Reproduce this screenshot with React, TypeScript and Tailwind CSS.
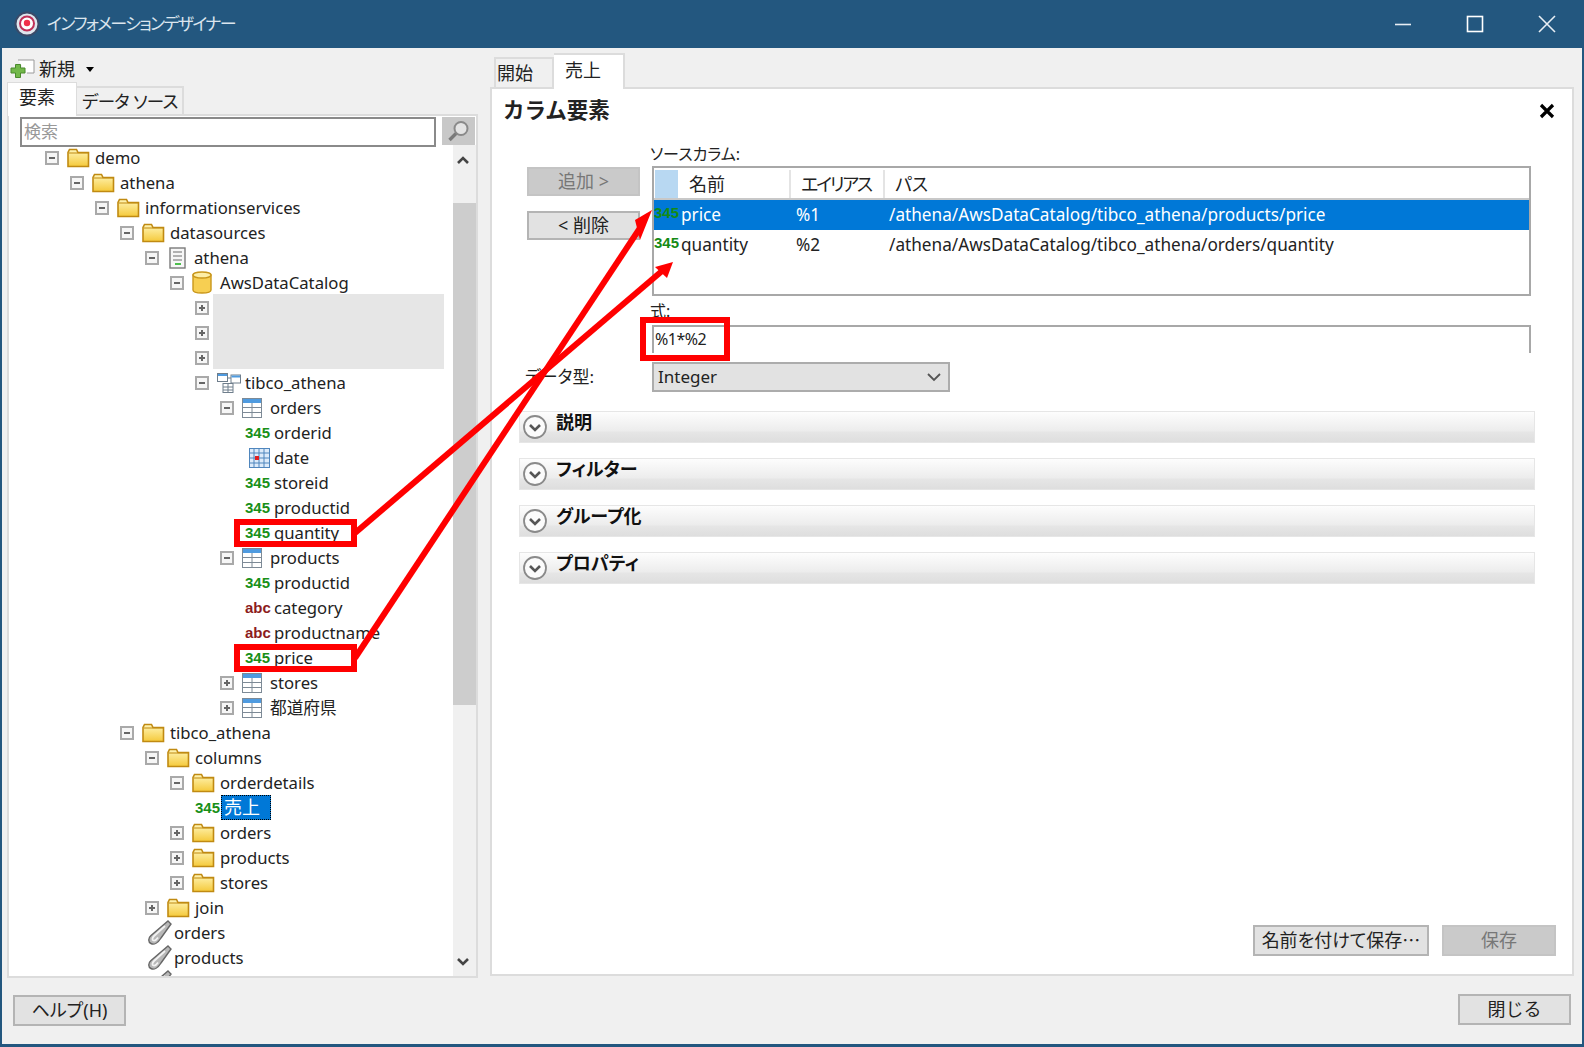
const font = "font-['Noto_Sans','Noto_Sans_CJK_JP',sans-serif]";

type Row = { l: number; t: string; i: string; e?: "-" | "+" };

const rows: Row[] = [
  { l: 0, t: "demo", i: "folder", e: "-" },
  { l: 1, t: "athena", i: "folder", e: "-" },
  { l: 2, t: "informationservices", i: "folder", e: "-" },
  { l: 3, t: "datasources", i: "folder", e: "-" },
  { l: 4, t: "athena", i: "doc", e: "-" },
  { l: 5, t: "AwsDataCatalog", i: "db", e: "-" },
  { l: 6, t: "", i: "blank", e: "+" },
  { l: 6, t: "", i: "blank", e: "+" },
  { l: 6, t: "", i: "blank", e: "+" },
  { l: 6, t: "tibco_athena", i: "schema", e: "-" },
  { l: 7, t: "orders", i: "table", e: "-" },
  { l: 8, t: "orderid", i: "num" },
  { l: 8, t: "date", i: "cal" },
  { l: 8, t: "storeid", i: "num" },
  { l: 8, t: "productid", i: "num" },
  { l: 8, t: "quantity", i: "num" },
  { l: 7, t: "products", i: "table", e: "-" },
  { l: 8, t: "productid", i: "num" },
  { l: 8, t: "category", i: "abc" },
  { l: 8, t: "productname", i: "abc" },
  { l: 8, t: "price", i: "num" },
  { l: 7, t: "stores", i: "table", e: "+" },
  { l: 7, t: "都道府県", i: "table", e: "+" },
  { l: 3, t: "tibco_athena", i: "folder", e: "-" },
  { l: 4, t: "columns", i: "folder", e: "-" },
  { l: 5, t: "orderdetails", i: "folder", e: "-" },
  { l: 6, t: "売上", i: "num" },
  { l: 5, t: "orders", i: "folder", e: "+" },
  { l: 5, t: "products", i: "folder", e: "+" },
  { l: 5, t: "stores", i: "folder", e: "+" },
  { l: 4, t: "join", i: "folder", e: "+" },
  { l: 4, t: "orders", i: "link" },
  { l: 4, t: "products", i: "link" },
  { l: 4, t: "", i: "link" },
];

function Folder() {
  return (
    <svg width="23" height="20" viewBox="0 0 23 20" className="mr-[5px] shrink-0">
      <defs>
        <linearGradient id="fld" x1="0" y1="0" x2="0" y2="1">
          <stop offset="0" stopColor="#fff6b8" />
          <stop offset="1" stopColor="#f5c93a" />
        </linearGradient>
      </defs>
      <path d="M1 18.5V4.5L2.5 1.5H9.5L11 4.5H21.5V18.5Z" fill="url(#fld)" stroke="#c08a12" strokeWidth="1.6" />
      <path d="M2 5H21" stroke="#c08a12" strokeWidth="1" />
    </svg>
  );
}

function TableIcon() {
  return (
    <svg width="20" height="20" viewBox="0 0 20 20" className="mr-[8px] shrink-0">
      <rect x="0.5" y="0.5" width="19" height="19" fill="#fff" stroke="#7d8a96" />
      <rect x="1" y="1" width="18" height="4" fill="#4f9be0" />
      <path d="M1 9.5H19M1 14.5H19M10 5V19" stroke="#7d8a96" />
    </svg>
  );
}

function TreeIcon({ i }: { i: string }) {
  if (i === "folder") return <Folder />;
  if (i === "table") return <TableIcon />;
  if (i === "num")
    return <span className="w-[29px] shrink-0 font-['Liberation_Sans',sans-serif] text-[15px] font-bold leading-none text-[#189018]">345</span>;
  if (i === "abc")
    return <span className="w-[29px] shrink-0 font-['Liberation_Sans',sans-serif] text-[15px] font-bold leading-none text-[#8c1c1c]">abc</span>;
  if (i === "doc")
    return (
      <svg width="17" height="22" viewBox="0 0 17 22" className="ml-[2px] mr-[8px] shrink-0">
        <rect x="1" y="1" width="15" height="20" fill="#f7f7f7" stroke="#7a7a7a" strokeWidth="1.4" />
        <path d="M4 5H13M4 9H13M4 13H13" stroke="#9a9a9a" strokeWidth="1.4" />
        <path d="M6 17H12" stroke="#22b022" strokeWidth="1.6" />
      </svg>
    );
  if (i === "db")
    return (
      <svg width="20" height="23" viewBox="0 0 20 23" className="mr-[8px] shrink-0">
        <path d="M1 4V19C1 21 5 22 10 22S19 21 19 19V4Z" fill="#f7cf52" stroke="#c9971b" strokeWidth="1.4" />
        <ellipse cx="10" cy="4" rx="9" ry="3" fill="#fdeea6" stroke="#c9971b" strokeWidth="1.4" />
      </svg>
    );
  if (i === "schema")
    return (
      <svg width="24" height="20" viewBox="0 0 24 20" className="mr-[4px] shrink-0">
        <rect x="0.5" y="0.5" width="10" height="8" fill="#fff" stroke="#6f7e8c" />
        <rect x="1" y="1" width="9" height="2" fill="#4f9be0" />
        <rect x="14" y="2" width="9.5" height="8" fill="#fff" stroke="#6f7e8c" />
        <rect x="14.5" y="2.5" width="8.5" height="2" fill="#4f9be0" />
        <rect x="6" y="10.5" width="10" height="9" fill="#fff" stroke="#6f7e8c" />
        <path d="M6 14H16M6 17H16M11 11V19M10.5 5H14" stroke="#6f7e8c" />
      </svg>
    );
  if (i === "cal")
    return (
      <svg width="21" height="20" viewBox="0 0 21 20" className="ml-[4px] mr-[4px] shrink-0">
        <rect x="0.5" y="0.5" width="20" height="19" fill="#dcebfa" stroke="#4f86bd" />
        <path d="M5 1V19M10 1V19M15 1V19M1 5H20M1 10H20M1 15H20" stroke="#4f86bd" />
        <rect x="6" y="8" width="4" height="4" fill="#e02020" />
      </svg>
    );
  if (i === "link")
    return (
      <svg width="25" height="25" viewBox="0 0 25 25" className="ml-[2px] mr-[2px] shrink-0">
        <path d="M21 1L24 4L14 18C11 23 7 25 4 23.5C1 22 1 18 4 15.5Z" fill="#b8b8b8" stroke="#666" strokeWidth="1.4" />
        <path d="M18 6L7 16C5 18 5 20 6.5 20.5C8 21 10 19 11 17.5" fill="none" stroke="#f2f2f2" strokeWidth="1.8" />
      </svg>
    );
  return null;
}

function Expander({ e }: { e: "-" | "+" }) {
  return (
    <span className="relative mr-[8px] h-[14px] w-[14px] shrink-0 border-2 border-[#a9a9a9] bg-[#f6f6f6]">
      <span className="absolute left-[2px] top-[4px] h-[2px] w-[6px] bg-[#666]" />
      {e === "+" && <span className="absolute left-[4px] top-[2px] h-[6px] w-[2px] bg-[#666]" />}
    </span>
  );
}

function TreeRow({ r }: { r: Row }) {
  const selected = r.t === "売上";
  return (
    <div className="flex h-[25px] shrink-0 items-center" style={{ paddingLeft: 36 + r.l * 25 }}>
      {r.e && <Expander e={r.e} />}
      <TreeIcon i={r.i} />
      {r.i === "blank" ? null : selected ? (
        <span className="ml-[-3px] border border-dotted border-black bg-[#0078d7] pl-[2px] pr-[10px] text-[18px] leading-[23px] text-white">{r.t}</span>
      ) : (
        <span className="text-[16.7px] leading-[22px] text-[#222]">{r.t}</span>
      )}
    </div>
  );
}

function Button({ children, disabled, className }: { children: React.ReactNode; disabled?: boolean; className: string }) {
  return (
    <div
      className={`flex items-center justify-center border-2 text-[18px] ${
        disabled ? "border-[#c4c4c4] bg-[#cacaca] text-[#777]" : "border-[#b4b4b4] bg-[#e2e2e2] text-[#222]"
      } ${className}`}
    >
      {children}
    </div>
  );
}

function Section({ label }: { label: string }) {
  return (
    <div className="relative flex h-[32px] items-start border border-[#e6e6e6] bg-[linear-gradient(#fdfdfd,#ececec_64%,#e6e6e6_66%,#dedede)]">
      <svg width="26" height="26" viewBox="0 0 26 26" className="ml-[2px] mt-[2px] shrink-0">
        <circle cx="13" cy="13" r="11" fill="#fbfbfb" stroke="#8a8a8a" strokeWidth="1.8" />
        <path d="M8 11L13 16L18 11" fill="none" stroke="#555" strokeWidth="2.6" />
      </svg>
      <span className="ml-[8px] mt-[-3px] text-[18px] font-bold leading-[26px] text-[#111] [font-feature-settings:'palt']">{label}</span>
    </div>
  );
}

export default function App() {
  return (
    <div className={`${font} relative flex h-[1047px] w-[1584px] flex-col overflow-hidden border-x-2 border-b-[3px] border-[#23577f] bg-[#f0f0f0]`}>
      {/* title bar */}
      <div className="mx-[-2px] flex h-[48px] shrink-0 items-center bg-[#23577f]">
        <svg width="26" height="26" viewBox="0 0 26 26" className="ml-[14px] shrink-0">
          <circle cx="13" cy="13" r="11.5" fill="#dfe6ee" stroke="#3a4a68" strokeWidth="2" />
          <circle cx="13" cy="12.5" r="7" fill="#fff" stroke="#c03058" strokeWidth="2" />
          <circle cx="13" cy="12" r="3.2" fill="#f0304a" />
        </svg>
        <span className="ml-[7px] text-[17px] tracking-[-1.7px] text-[#dbe5ee] [font-feature-settings:'palt']">インフォメーションデザイナー</span>
        <svg width="18" height="18" viewBox="0 0 18 18" className="ml-auto mr-[54px]">
          <path d="M1 9.5H17" stroke="#e8eef4" strokeWidth="1.6" />
        </svg>
        <svg width="18" height="18" viewBox="0 0 18 18" className="mr-[54px]">
          <rect x="1.5" y="1.5" width="15" height="15" fill="none" stroke="#fff" strokeWidth="1.6" />
        </svg>
        <svg width="18" height="18" viewBox="0 0 18 18" className="mr-[28px]">
          <path d="M1 1L17 17M17 1L1 17" stroke="#e8eef4" strokeWidth="1.6" />
        </svg>
      </div>

      {/* body */}
      <div className="flex min-h-0 flex-1 pl-[5px] pr-[8px]">
        {/* left column */}
        <div className="flex w-[471px] shrink-0 flex-col">
          <div className="flex h-[34px] shrink-0 items-center pl-[3px] pt-[8px]">
            <svg width="25" height="20" viewBox="0 0 25 20" className="shrink-0">
              <path d="M8 1H24V14H17" fill="#fff" stroke="#9a9a9a" strokeWidth="1" />
              <path d="M5.5 5.5H10.5V9H15V14H10.5V18.5H5.5V14H1V9H5.5Z" fill="#72b84a" stroke="#4a8a2c" />
            </svg>
            <span className="ml-[4px] text-[18px] text-[#222]">新規</span>
            <span className="ml-[11px] h-0 w-0 border-x-[4px] border-t-[5px] border-x-transparent border-t-black" />
          </div>
          <div className="flex h-[32px] shrink-0 items-end">
            <div className="z-10 mb-[-2px] flex h-[34px] w-[70px] items-center border-x border-t border-[#dcdcdc] bg-white pb-[4px] pl-[11px] text-[18px] text-[#222]">要素</div>
            <div className="flex h-[28px] w-[107px] items-center whitespace-nowrap border-r-2 border-t-2 border-[#dcdcdc] pl-[5px] text-[17.5px] tracking-[-0.6px] text-[#222] [font-feature-settings:'palt']">データ ソース</div>
          </div>
          <div className="flex min-h-0 flex-1 flex-col border-2 border-[#dcdcdc] bg-white">
            <div className="z-10 flex h-[29px] shrink-0 items-start pl-[11px] pt-[1px]">
              <div className="flex h-[30px] w-[416px] shrink-0 items-center border-2 border-[#8a8a8a] bg-white pl-[2px] text-[17px] text-[#999]">検索</div>
              <div className="ml-[6px] flex h-[28px] w-[33px] shrink-0 items-center justify-center bg-[#c8c8c8]">
                <svg width="24" height="24" viewBox="0 0 24 24">
                  <circle cx="14" cy="9.5" r="6.5" fill="#e4e4e4" stroke="#8a8a8a" strokeWidth="2" />
                  <path d="M9 14.5L2.5 21" stroke="#7a7a7a" strokeWidth="3.4" />
                </svg>
              </div>
            </div>
            <div className="flex min-h-0 flex-1">
              <div className="relative flex min-w-0 flex-1 flex-col overflow-hidden">
                <div className="absolute left-[204px] top-[149px] h-[75px] w-[231px] bg-[#e6e6e6]" />
                <div className="relative flex flex-col">
                  {rows.map((r, idx) => (
                    <TreeRow key={idx} r={r} />
                  ))}
                </div>
              </div>
              <div className="flex w-[23px] shrink-0 flex-col items-center bg-[#f0f0f0]">
                <svg width="14" height="10" viewBox="0 0 14 10" className="mr-[3px] mt-[10px] shrink-0">
                  <path d="M2 8L7 3L12 8" fill="none" stroke="#444" strokeWidth="2.6" />
                </svg>
                <div className="mt-[38px] h-[502px] w-full shrink-0 bg-[#cdcdcd]" />
                <svg width="14" height="10" viewBox="0 0 14 10" className="mb-[9px] mr-[3px] mt-auto shrink-0">
                  <path d="M2 2L7 7L12 2" fill="none" stroke="#444" strokeWidth="2.6" />
                </svg>
              </div>
            </div>
          </div>
        </div>

        {/* right column */}
        <div className="ml-[12px] flex min-w-0 flex-1 flex-col pt-[5px]">
          <div className="flex h-[34px] shrink-0 items-end pl-[4px]">
            <div className="flex h-[30px] w-[60px] items-center border-x-2 border-t-2 border-[#dcdcdc] pl-[1px] text-[18px] text-[#222]">開始</div>
            <div className="z-10 mb-[-2px] flex h-[36px] w-[71px] items-center border-r-2 border-t-2 border-[#dcdcdc] bg-white pb-[4px] pl-[11px] text-[18px] text-[#222]">売上</div>
          </div>
          <div className="mb-[2px] flex min-h-0 flex-1 flex-col border-2 border-[#dcdcdc] bg-white">
            <div className="flex h-[56px] shrink-0 items-start justify-between pl-[11px] pr-[17px] pt-[6px]">
              <span className="text-[21.5px] font-bold leading-[30px] text-[#222]">カラム要素</span>
              <svg width="16" height="16" viewBox="0 0 16 16" className="mt-[8px]">
                <path d="M2 2L14 14M14 2L2 14" stroke="#000" strokeWidth="3.2" />
              </svg>
            </div>

            <div className="flex shrink-0 pl-[35px] pr-[41px]">
              <div className="flex w-[113px] shrink-0 flex-col gap-[15px] pt-[22px]">
                <Button disabled className="h-[29px]">追加 &gt;</Button>
                <Button className="h-[29px]">&lt; 削除</Button>
              </div>
              <div className="ml-[10px] min-w-0 flex-1">
                <div className="h-[21px] text-[16px] leading-[18px] text-[#222] [font-feature-settings:'palt']">ソースカラム:</div>
                <div className="ml-[2px] h-[130px] border-2 border-[#a8a8a8] bg-white">
                  <div className="flex h-[32px] items-stretch border-b-2 border-[#c8c8c8] pl-[1px] pt-[2px] text-[18px] text-[#222]">
                    <div className="w-[23px] bg-[#b8d8f2]" />
                    <div className="w-[113px] border-r-2 border-[#e4e4e4] pl-[11px] leading-[28px]">名前</div>
                    <div className="w-[94px] whitespace-nowrap border-r-2 border-[#e4e4e4] pl-[10px] leading-[28px] tracking-[-2.2px] [font-feature-settings:'palt']">エイリアス</div>
                    <div className="pl-[10px] leading-[28px] [font-feature-settings:'palt']">パス</div>
                  </div>
                  <div className="flex h-[30px] items-center bg-[#0078d7] text-[17.2px] text-white">
                    <span className="mb-[6px] w-[27px] font-['Liberation_Sans',sans-serif] text-[15px] font-bold leading-none text-[#158a15]">345</span>
                    <span className="w-[115px]">price</span>
                    <span className="w-[93px]">%1</span>
                    <span>/athena/AwsDataCatalog/tibco_athena/products/price</span>
                  </div>
                  <div className="flex h-[30px] items-center text-[17.2px] text-[#222]">
                    <span className="mb-[6px] w-[27px] font-['Liberation_Sans',sans-serif] text-[15px] font-bold leading-none text-[#158a15]">345</span>
                    <span className="w-[115px]">quantity</span>
                    <span className="w-[93px]">%2</span>
                    <span>/athena/AwsDataCatalog/tibco_athena/orders/quantity</span>
                  </div>
                </div>
                <div className="mt-[4px] h-[25px] text-[16px] leading-[22px] text-[#222]">式:</div>
                <div className="ml-[2px] h-[28px] border-x-2 border-t-2 border-[#a8a8a8] pl-[1px] text-[16px] leading-[25px] tracking-[-0.5px] text-[#222]">%1*%2</div>
              </div>
            </div>

            <div className="mt-[9px] flex h-[30px] shrink-0 items-center pl-[33px]">
              <span className="w-[127px] text-[17px] text-[#222] [font-feature-settings:'palt']">データ型:</span>
              <div className="flex h-[30px] w-[298px] items-center justify-between border-2 border-[#acacac] bg-[#e2e2e2] pl-[4px] pr-[6px] text-[17px] text-[#222]">
                Integer
                <svg width="16" height="10" viewBox="0 0 16 10">
                  <path d="M2 2L8 8L14 2" fill="none" stroke="#555" strokeWidth="1.8" />
                </svg>
              </div>
            </div>

            <div className="mt-[19px] flex shrink-0 flex-col gap-[15px] pl-[27px] pr-[37px]">
              <Section label="説明" />
              <Section label="フィルター" />
              <Section label="グループ化" />
              <Section label="プロパティ" />
            </div>

            <div className="mt-auto flex shrink-0 justify-end gap-[13px] pb-[18px] pr-[16px]">
              <Button className="h-[31px] w-[176px] [font-feature-settings:'palt']">名前を付けて保存⋯</Button>
              <Button disabled className="h-[31px] w-[114px]">保存</Button>
            </div>
          </div>
        </div>
      </div>

      {/* footer */}
      <div className="flex h-[66px] shrink-0 items-start justify-between pl-[11px] pr-[11px]">
        <Button className="mt-[17px] h-[31px] w-[113px] [font-feature-settings:'palt']">ヘルプ(H)</Button>
        <Button className="mt-[16px] h-[31px] w-[113px]">閉じる</Button>
      </div>

      {/* annotation overlay */}
      <div className="absolute left-[232px] top-[519px] h-[28px] w-[123px] border-[6px] border-[#ff0000]" />
      <div className="absolute left-[232px] top-[644px] h-[28px] w-[123px] border-[6px] border-[#ff0000]" />
      <div className="absolute left-[638px] top-[317px] h-[44px] w-[90px] border-[6px] border-[#ff0000]" />
      <svg width="1584" height="1047" viewBox="0 0 1584 1047" className="pointer-events-none absolute left-[-2px] top-0">
        <path d="M355 533L662 271" stroke="#ff0000" strokeWidth="6" />
        <path d="M355 658L642 225" stroke="#ff0000" strokeWidth="6" />
        <polygon points="652,210 635,220 640,240" fill="#ff0000" />
        <polygon points="673,262 655,267 667,278" fill="#ff0000" />
      </svg>
    </div>
  );
}
